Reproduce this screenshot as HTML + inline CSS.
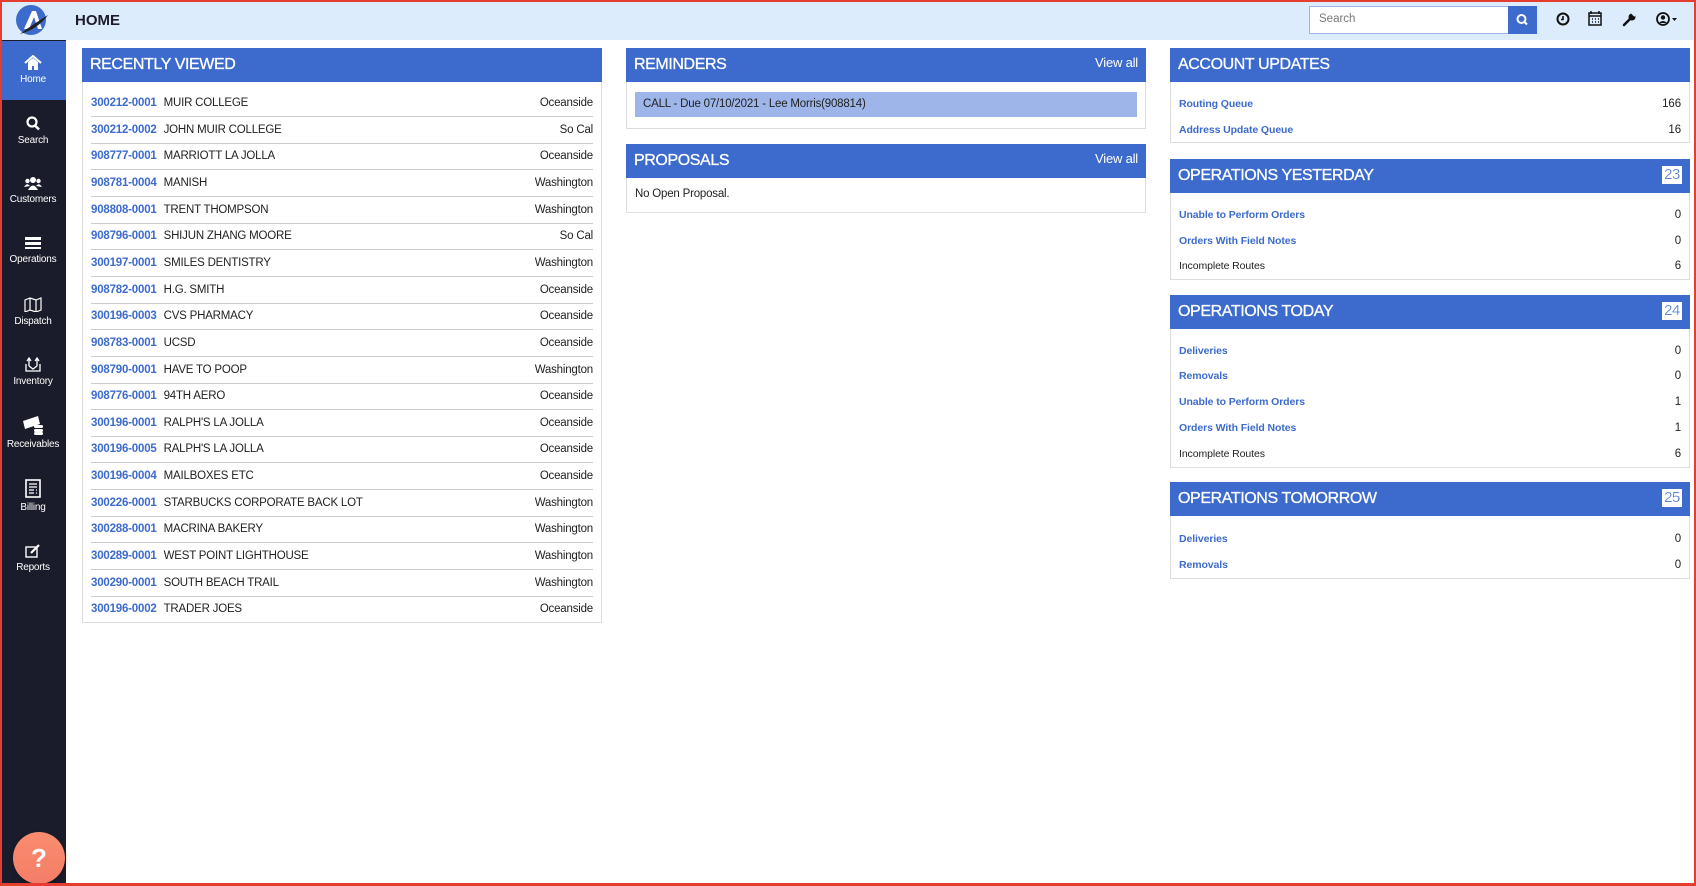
<!DOCTYPE html>
<html><head><meta charset="utf-8"><style>
*{box-sizing:border-box;margin:0;padding:0}
body{width:1696px;height:886px;position:relative;overflow:hidden;background:#fff;font-family:"Liberation Sans",Arial,sans-serif;font-size:12px;color:#222}
.frame{position:absolute;inset:0;border:2px solid #e53d2f;border-bottom-width:3px;pointer-events:none;z-index:10}
.top{position:absolute;left:0;top:0;width:1696px;height:40px;background:#dcecfc}
.side{position:absolute;left:0;top:40px;width:66px;height:843px;background:#1b1c2b}
.nav{position:absolute;left:0;width:66px;text-align:center;color:#fff;font-size:10px;letter-spacing:-.2px}
.nav svg{display:block;margin:0 auto 4px}
.panel{position:absolute;border:1px solid #ddd;background:#fff}
.ph{position:absolute;left:-1px;right:-1px;top:-1px;height:34px;background:#3d6bcd;color:#fff;font-size:16px;padding:8px 8px;letter-spacing:-.4px;-webkit-text-stroke:.3px #fff}
.ph .va{position:absolute;right:8px;top:7px;font-size:13px;letter-spacing:-.2px;-webkit-text-stroke:0}
.ph .bd{position:absolute;right:8px;top:7px;background:#fff;color:#3d6bcd;font-size:15px;padding:0 2px;line-height:18px}
.row{position:absolute;left:8px;right:8px;height:27px;border-bottom:1px solid #ccc;line-height:26px;font-size:11.5px;letter-spacing:-.2px}
.row b{color:#3d6bcd;font-weight:bold;margin-right:7px}
.row .r{position:absolute;right:0;top:0}
.arow{position:absolute;left:8px;right:8px;line-height:16px;font-size:10.5px;letter-spacing:-.1px}
.arow b{color:#3d6bcd}
.arow .r{position:absolute;right:0;top:0;font-size:11.5px}
</style></head><body>
<div class="top">
 <svg style="position:absolute;left:14px;top:3px" width="36" height="36" viewBox="0 0 36 36"><circle cx="17" cy="17" r="15" fill="#3d6bcd"/><path d="M10 26 L18 8 L22 8 L28 26 L24 26 L20 14 L15 26Z" fill="#fff"/><path d="M6 31 Q18 22 34 12 Q24 26 6 31Z" fill="#222"/></svg>
 <div style="position:absolute;left:75px;top:12px;font-size:15px;font-weight:bold;color:#1c1c2a">HOME</div>
 <div style="position:absolute;left:1309px;top:6px;width:200px;height:28px;border:1px solid #9fb4e4;background:#fff;font-size:11.5px;color:#777;padding:6px 9px">Search</div>
 <div style="position:absolute;left:1508px;top:6px;width:29px;height:28px;background:#3d6bcd"><svg width="29" height="28" viewBox="0 0 29 28"><circle cx="13.5" cy="13" r="4" fill="none" stroke="#fff" stroke-width="2"/><path d="M16.5 16 L19 18.5" stroke="#fff" stroke-width="2"/></svg></div>
 <svg style="position:absolute;left:1556px;top:12px" width="14" height="14" viewBox="0 0 14 14"><circle cx="7" cy="7" r="5.5" fill="none" stroke="#111" stroke-width="2"/><path d="M7 4V7.5H5" stroke="#111" stroke-width="1.6" fill="none"/></svg>
 <svg style="position:absolute;left:1588px;top:11px" width="14" height="15" viewBox="0 0 14 15"><rect x="1" y="2" width="12" height="12" fill="none" stroke="#111" stroke-width="1.5"/><path d="M1 5H13M3 0V3M11 0V3M4 8h1M7 8h1M10 8h1M4 11h1M7 11h1M10 11h1" stroke="#111" stroke-width="1.5"/></svg>
 <svg style="position:absolute;left:1622px;top:12px" width="15" height="15" viewBox="0 0 15 15"><path d="M2 13 L8 7" stroke="#111" stroke-width="2.5" stroke-linecap="round"/><circle cx="10" cy="5" r="3.5" fill="#111"/><path d="M10 1 L13 4" stroke="#dcecfc" stroke-width="2"/></svg>
 <svg style="position:absolute;left:1656px;top:11px" width="22" height="16" viewBox="0 0 22 16"><circle cx="7" cy="8" r="6" fill="none" stroke="#111" stroke-width="1.8"/><circle cx="7" cy="6.5" r="2.2" fill="#111"/><path d="M3 12 Q7 8 11 12" fill="#111"/><path d="M16 7h5l-2.5 3z" fill="#111"/></svg>
</div>
<div class="side">
 <div style="position:absolute;left:0;top:1px;width:66px;height:59px;background:#3d6bcd"></div>
 <div class="nav" style="top:15px"><svg width="18" height="15" viewBox="0 0 18 15"><path d="M1 8 L9 1 L17 8" stroke="#fff" stroke-width="2" fill="none"/><path d="M4 7V15H8V11H10V15H14V7L9 3Z" fill="#fff"/></svg>Home</div>
 <div class="nav" style="top:76px"><svg width="16" height="15" viewBox="0 0 16 15"><circle cx="7" cy="6" r="4.5" fill="none" stroke="#fff" stroke-width="2.2"/><path d="M10 9.5L14 13.5" stroke="#fff" stroke-width="2.5"/></svg>Search</div>
 <div class="nav" style="top:136px"><svg width="18" height="14" viewBox="0 0 18 14"><circle cx="9" cy="4" r="3" fill="#fff"/><circle cx="3.5" cy="5" r="2.2" fill="#fff"/><circle cx="14.5" cy="5" r="2.2" fill="#fff"/><path d="M4 14 Q9 5 14 14Z M0 11 Q3 6 6 10Z M12 10 Q15 6 18 11Z" fill="#fff"/></svg>Customers</div>
 <div class="nav" style="top:196px"><svg width="16" height="14" viewBox="0 0 16 14"><rect x="0" y="1" width="16" height="3" fill="#fff"/><rect x="0" y="6" width="16" height="3" fill="#fff"/><rect x="0" y="11" width="16" height="2" fill="#fff"/></svg>Operations</div>
 <div class="nav" style="top:257px"><svg width="18" height="15" viewBox="0 0 18 15"><path d="M1 3L6 1L12 3L17 1V13L12 15L6 13L1 15Z M6 1V13 M12 3V15" fill="none" stroke="#fff" stroke-width="1.2"/></svg>Dispatch</div>
 <div class="nav" style="top:317px"><svg width="18" height="15" viewBox="0 0 18 15"><path d="M2 7V14H16V7 M5 9L5 2 M3 4L5 1L7 4 M13 9L13 2 M11 4L13 1L15 4 M5 9L9 12L13 9" fill="none" stroke="#fff" stroke-width="1.3"/></svg>Inventory</div>
 <div class="nav" style="top:375px"><svg width="22" height="20" viewBox="0 0 22 20"><path d="M1 6L16 1L18 9L3 14Z" fill="#fff"/><rect x="12" y="10" width="9" height="3" rx="1.5" fill="#fff"/><rect x="12" y="14" width="9" height="3" rx="1.5" fill="#fff"/><rect x="12" y="17" width="9" height="3" rx="1.5" fill="#fff"/></svg>Receivables</div>
 <div class="nav" style="top:439px"><svg width="16" height="19" viewBox="0 0 16 19"><rect x="1" y="1" width="14" height="17" fill="none" stroke="#fff" stroke-width="1.6"/><path d="M4 5H12M4 8H12M4 11H9M11 11H12M4 14H9M11 14H12" stroke="#fff" stroke-width="1.3"/></svg>Billing</div>
 <div class="nav" style="top:504px"><svg width="16" height="14" viewBox="0 0 16 14"><rect x="1" y="3" width="11" height="10" fill="none" stroke="#fff" stroke-width="1.4"/><path d="M6 9L14 1" stroke="#fff" stroke-width="2.2"/></svg>Reports</div>
</div>
<div style="position:absolute;left:13px;top:832px;width:52px;height:52px;border-radius:50%;background:linear-gradient(#f98d6f,#f47d67);box-shadow:0 2px 5px rgba(0,0,0,.3);color:#fff;font-size:26px;font-weight:bold;text-align:center;line-height:52px">?</div>

<div class="panel" style="left:82px;top:48px;width:520px;height:575px">
 <div class="ph">RECENTLY VIEWED</div>
 <div id="rv"></div>
</div>

<div class="panel" style="left:626px;top:48px;width:520px;height:81px">
 <div class="ph">REMINDERS<span class="va">View all</span></div>
 <div style="position:absolute;left:8px;right:8px;top:43px;height:25px;background:#9db5e8;padding:6px 8px;font-size:11.5px;letter-spacing:-.2px">CALL - Due 07/10/2021 - Lee Morris(908814)</div>
</div>
<div class="panel" style="left:626px;top:144px;width:520px;height:69px">
 <div class="ph">PROPOSALS<span class="va">View all</span></div>
 <div style="position:absolute;left:8px;top:43px;font-size:11.5px;letter-spacing:-.2px">No Open Proposal.</div>
</div>

<div class="panel" style="left:1170px;top:48px;width:520px;height:95px">
 <div class="ph">ACCOUNT UPDATES</div>
 <div class="arow" style="top:47px"><b>Routing Queue</b><span class="r">166</span></div>
 <div class="arow" style="top:73px"><b>Address Update Queue</b><span class="r">16</span></div>
</div>
<div class="panel" style="left:1170px;top:159px;width:520px;height:121px">
 <div class="ph">OPERATIONS YESTERDAY<span class="bd">23</span></div>
 <div class="arow" style="top:47px"><b>Unable to Perform Orders</b><span class="r">0</span></div>
 <div class="arow" style="top:73px"><b>Orders With Field Notes</b><span class="r">0</span></div>
 <div class="arow" style="top:98px">Incomplete Routes<span class="r">6</span></div>
</div>
<div class="panel" style="left:1170px;top:295px;width:520px;height:173px">
 <div class="ph">OPERATIONS TODAY<span class="bd">24</span></div>
 <div class="arow" style="top:47px"><b>Deliveries</b><span class="r">0</span></div>
 <div class="arow" style="top:72px"><b>Removals</b><span class="r">0</span></div>
 <div class="arow" style="top:98px"><b>Unable to Perform Orders</b><span class="r">1</span></div>
 <div class="arow" style="top:124px"><b>Orders With Field Notes</b><span class="r">1</span></div>
 <div class="arow" style="top:150px">Incomplete Routes<span class="r">6</span></div>
</div>
<div class="panel" style="left:1170px;top:482px;width:520px;height:97px">
 <div class="ph">OPERATIONS TOMORROW<span class="bd">25</span></div>
 <div class="arow" style="top:48px"><b>Deliveries</b><span class="r">0</span></div>
 <div class="arow" style="top:74px"><b>Removals</b><span class="r">0</span></div>
</div>
<div class="frame"></div>
<script>
var d=[["300212-0001","MUIR COLLEGE","Oceanside"],["300212-0002","JOHN MUIR COLLEGE","So Cal"],["908777-0001","MARRIOTT LA JOLLA","Oceanside"],["908781-0004","MANISH","Washington"],["908808-0001","TRENT THOMPSON","Washington"],["908796-0001","SHIJUN ZHANG MOORE","So Cal"],["300197-0001","SMILES DENTISTRY","Washington"],["908782-0001","H.G. SMITH","Oceanside"],["300196-0003","CVS PHARMACY","Oceanside"],["908783-0001","UCSD","Oceanside"],["908790-0001","HAVE TO POOP","Washington"],["908776-0001","94TH AERO","Oceanside"],["300196-0001","RALPH'S LA JOLLA","Oceanside"],["300196-0005","RALPH'S LA JOLLA","Oceanside"],["300196-0004","MAILBOXES ETC","Oceanside"],["300226-0001","STARBUCKS CORPORATE BACK LOT","Washington"],["300288-0001","MACRINA BAKERY","Washington"],["300289-0001","WEST POINT LIGHTHOUSE","Washington"],["300290-0001","SOUTH BEACH TRAIL","Washington"],["300196-0002","TRADER JOES","Oceanside"]];
var h="";d.forEach(function(r,i){h+='<div class="row" style="top:'+(41+i*26.65).toFixed(1)+'px;'+(i==19?'border-bottom:0':'')+'"><b>'+r[0]+'</b>'+r[1]+'<span class="r">'+r[2]+'</span></div>'});
document.getElementById("rv").innerHTML=h;
</script>
</body></html>
